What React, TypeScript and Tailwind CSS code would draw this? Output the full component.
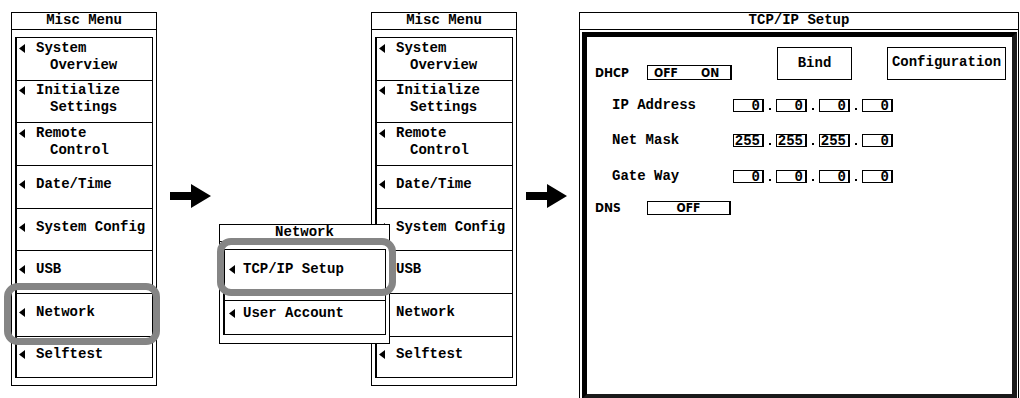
import React from 'react'

type MenuItem = { lines: string[]; h: string }

const miscItems: MenuItem[] = [
  { lines: ['System', 'Overview'], h: 'h-[43px]' },
  { lines: ['Initialize', 'Settings'], h: 'h-[42px]' },
  { lines: ['Remote', 'Control'], h: 'h-[43px]' },
  { lines: ['Date/Time'], h: 'h-[43px]' },
  { lines: ['System Config'], h: 'h-[42px]' },
  { lines: ['USB'], h: 'h-[43px]' },
  { lines: ['Network'], h: 'h-[43px]' },
  { lines: ['Selftest'], h: 'h-[40px]' },
]

const narrow = "font-['Liberation_Sans_Narrow','DejaVu_Sans_Condensed','Liberation_Sans',sans-serif] font-bold text-[12px] leading-none"

function Tri() {
  return (
    <svg width="6" height="9" viewBox="0 0 6 9" className="shrink-0">
      <path d="M0 4.5 L6 0 L6 9 Z" fill="black" />
    </svg>
  )
}

function BigArrow({ className }: { className: string }) {
  return (
    <svg width="41" height="24" viewBox="0 0 41 24" className={`shrink-0 ${className}`}>
      <path d="M0 8 H21 V0 L41 12 L21 24 V16 H0 Z" fill="black" />
    </svg>
  )
}

function MiscMenu() {
  return (
    <div className="w-[146px] h-[374px] border border-black bg-white flex flex-col">
      <div className="h-[17px] border-b border-black text-center leading-[15px]">Misc Menu</div>
      <div className="mx-[3px] mt-[7px] border-l-2 border-r border-t border-b border-black flex flex-col">
        {miscItems.map((it, i) => (
          <div
            key={it.lines[0]}
            className={`${it.h} flex items-center pb-[5px] pl-[2px] ${i < miscItems.length - 1 ? 'border-b border-black' : ''}`}
          >
            <div className="flex flex-col">
              <div className="flex items-center">
                <Tri />
                <span className="ml-[11px]">{it.lines[0]}</span>
              </div>
              {it.lines[1] && <span className="pl-[31px]">{it.lines[1]}</span>}
            </div>
          </div>
        ))}
      </div>
    </div>
  )
}

function NetworkPopup() {
  return (
    <div className="absolute left-0 top-[212px] z-10 w-[171px] h-[120px] border border-black bg-white flex flex-col">
      <div className="h-[17px] border-b border-black text-center leading-[15px]">Network</div>
      <div className="mx-[3px] mt-[7px] mb-[8px] flex-1 border-l-2 border-r border-t border-b border-black flex flex-col">
        <div className="h-[51px] border-b border-black flex items-center pb-[12px] pl-[4px]">
          <Tri />
          <span className="ml-[8px]">TCP/IP Setup</span>
        </div>
        <div className="flex-1 flex items-center pb-[8px] pl-[4px]">
          <Tri />
          <span className="ml-[8px]">User Account</span>
        </div>
      </div>
    </div>
  )
}

function Octet({ v }: { v: string }) {
  return (
    <div className="w-[31px] h-[13px] border border-black border-r-2 flex items-center justify-end pr-[2px] text-[14px] leading-none">
      {v}
    </div>
  )
}

function Dot() {
  return (
    <div className="w-[12px] h-[13px] flex items-end justify-center pb-[2px]">
      <div className="w-[2px] h-[2px] bg-black" />
    </div>
  )
}

function IpRow({ label, vals, mt }: { label: string; vals: string[]; mt: string }) {
  return (
    <div className={`${mt} pl-[25px] flex items-center h-[13px]`}>
      <span className="w-[121px]">{label}</span>
      <Octet v={vals[0]} />
      <Dot />
      <Octet v={vals[1]} />
      <Dot />
      <Octet v={vals[2]} />
      <Dot />
      <Octet v={vals[3]} />
    </div>
  )
}

function TcpIpPanel() {
  return (
    <div className="ml-[12px] w-[440px] h-[388px] shrink-0 border border-black bg-white flex flex-col">
      <div className="h-[17px] border-b border-black text-center leading-[15px]">TCP/IP Setup</div>
      <div className="ml-[2px] mr-[1px] mt-[2px] flex-1 border-[5px] border-t-black border-l-black border-r-[#1a1a1a] border-b-[#1a1a1a] flex flex-col">
        <div className="mt-[10px] pl-[8px] flex items-end">
          <div className="flex items-center h-[15px]">
            <span className={`w-[52px] ${narrow}`}>DHCP</span>
            <div className={`w-[85px] h-[15px] border border-black border-r-2 flex items-center pl-[6px] ${narrow}`}>
              <span className="w-[47px]">OFF</span>
              <span>ON</span>
            </div>
          </div>
          <div className="ml-[45px] w-[75px] h-[33px] border border-black flex items-center justify-center">Bind</div>
          <div className="ml-[35px] w-[119px] h-[33px] border border-black flex items-center justify-center pb-[3px]">
            Configuration
          </div>
        </div>
        <IpRow label="IP Address" vals={['0', '0', '0', '0']} mt="mt-[19px]" />
        <IpRow label="Net Mask" vals={['255', '255', '255', '0']} mt="mt-[22px]" />
        <IpRow label="Gate Way" vals={['0', '0', '0', '0']} mt="mt-[23px]" />
        <div className="mt-[18px] pl-[8px] flex items-center h-[14px]">
          <span className={`w-[52px] ${narrow}`}>DNS</span>
          <div className={`w-[84px] h-[14px] border border-black border-r-2 flex items-center justify-center ${narrow}`}>OFF</div>
        </div>
      </div>
    </div>
  )
}

export default function App() {
  return (
    <div className="w-[1020px] h-[398px] overflow-hidden bg-white text-black flex items-start pl-[11px] pt-[12px] font-['Liberation_Mono',monospace] font-bold text-[14px] leading-[17px]">
      <div className="relative shrink-0">
        <MiscMenu />
        <div className="absolute left-[-7px] top-[271px] w-[156px] h-[62px] rounded-[14px] border-[7px] border-[#858585]" />
      </div>

      <BigArrow className="ml-[13px] mt-[172px]" />

      <div className="relative ml-[8px] w-[298px] shrink-0">
        <div className="ml-[152px]">
          <MiscMenu />
        </div>
        <NetworkPopup />
        <div className="absolute left-[-2px] top-[226px] z-20 w-[179px] h-[58px] rounded-[14px] border-[7px] border-[#858585]" />
      </div>

      <BigArrow className="ml-[9px] mt-[172px]" />

      <TcpIpPanel />
    </div>
  )
}
